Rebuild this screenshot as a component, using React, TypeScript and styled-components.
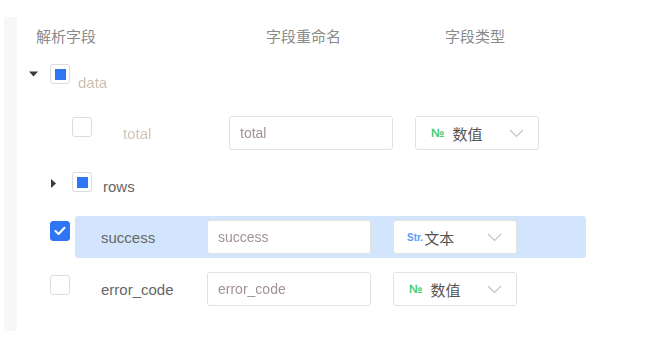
import styled, { createGlobalStyle } from 'styled-components';

const GlobalStyle = createGlobalStyle`
  body {
    margin: 0;
    background: #fff;
    font-family: "Liberation Sans", "Noto Sans CJK SC", sans-serif;
  }
`

type FieldType = 'num' | 'str';

type Field = {
  name: string;
  rename?: string;
  type?: FieldType;
  origin: number;
  checkTop: number;
  state: 'none' | 'partial' | 'checked';
  caret?: 'down' | 'right';
  parent?: boolean;
  faded?: boolean;
  active?: boolean;
}

const fields: Field[] = [
  { name: 'data', origin: 50, checkTop: 4, state: 'partial', caret: 'down', parent: true, faded: true },
  { name: 'total', rename: 'total', type: 'num', origin: 72, checkTop: 5, state: 'none', faded: true },
  { name: 'rows', origin: 72, checkTop: 8, state: 'partial', caret: 'right', parent: true },
  { name: 'success', rename: 'success', type: 'str', origin: 50, checkTop: 5, state: 'checked', active: true },
  { name: 'error_code', rename: 'error_code', type: 'num', origin: 50, checkTop: 7, state: 'none' },
];

const Page = styled.div`
  display: flex;
  padding: 17px 0 0 4px;
`

const Strip = styled.div`
  width: 13px;
  height: 314px;
  flex-shrink: 0;
  background: #f7f7f7;
`

const Content = styled.div`
  flex: 1;
  padding-top: 9px;
`

const HeaderRow = styled.div`
  display: flex;
  height: 22px;
  line-height: 22px;
  font-size: 15px;
  color: #8a8a8a;
`

const HeadCell = styled.div<{ $left: number; $width: number }>`
  margin-left: ${p => p.$left}px;
  width: ${p => p.$width}px;
`

const Tree = styled.div`
  display: flex;
  flex-direction: column;
  gap: 10px;
  margin-top: 12px;
`

const Row = styled.div<{ $indent: number }>`
  display: flex;
  align-items: center;
  height: 42px;
  padding-left: ${p => p.$indent}px;
`

const Toggle = styled.div<{ $top: number }>`
  display: flex;
  align-items: center;
  align-self: flex-start;
  margin-top: ${p => p.$top}px;
  height: 20px;
`

const CaretSlot = styled.div`
  width: 21px;
  display: flex;
  align-items: center;
`

const Box = styled.div<{ $checked: boolean }>`
  box-sizing: border-box;
  width: 20px;
  height: 20px;
  border-radius: 3px;
  border: 1px solid ${p => (p.$checked ? '#2f76f5' : '#dcdcdc')};
  background: ${p => (p.$checked ? '#2f76f5' : '#fff')};
  display: flex;
  align-items: center;
  justify-content: center;
`

const Partial = styled.div`
  width: 11px;
  height: 11px;
  background: #2f76f5;
`

const ParentLabel = styled.span<{ $faded: boolean }>`
  margin-left: ${p => (p.$faded ? 8 : 11)}px;
  margin-top: 2px;
  font-size: 15px;
  color: ${p => (p.$faded ? '#cbbfae' : '#666')};
  ${p => p.$faded && 'filter: blur(0.6px);'}
`

const Cells = styled.div<{ $active: boolean }>`
  display: flex;
  align-items: center;
  height: 42px;
  margin-left: 5px;
  padding: 0 69px 0 26px;
  border-radius: 3px;
  background: ${p => (p.$active ? '#d2e5fc' : 'transparent')};
`

const Label = styled.span<{ $faded: boolean }>`
  width: 106px;
  font-size: 15px;
  color: ${p => (p.$faded ? '#d2c6b6' : '#666')};
  ${p => p.$faded && 'filter: blur(0.6px);'}
`

const Input = styled.div`
  box-sizing: border-box;
  width: 164px;
  height: 34px;
  border: 1px solid #e2e2e2;
  border-radius: 3px;
  background: #fff;
  padding-left: 10px;
  display: flex;
  align-items: center;
`

const InputValue = styled.span`
  font-size: 14px;
  color: #a2909c;
  filter: blur(0.6px);
`

const Select = styled.div`
  box-sizing: border-box;
  width: 124px;
  height: 34px;
  margin-left: 22px;
  border: 1px solid #e2e2e2;
  border-radius: 3px;
  background: #fff;
  display: flex;
  align-items: center;
  padding: 0 14px 0 13px;
`

const Tag = styled.span<{ $kind: FieldType }>`
  font-size: ${p => (p.$kind === 'str' ? 10 : 12)}px;
  font-weight: bold;
  color: ${p => (p.$kind === 'str' ? '#5b9cf6' : '#45cc72')};
  margin-left: ${p => (p.$kind === 'str' ? 0 : 2)}px;
  margin-right: ${p => (p.$kind === 'str' ? 1 : 8)}px;
`

const TypeName = styled.span`
  font-size: 15px;
  color: #555;
`

const Chevron = styled.svg`
  margin-left: auto;
`

const CaretDown = () => (
  <svg width="9" height="6" viewBox="0 0 9 6">
    <path d="M0 0.5 L9 0.5 L4.5 5.5 Z" fill="#3a3a3a" />
  </svg>
)

const CaretRight = () => (
  <svg width="5" height="9" viewBox="0 0 5 9" style={{ marginTop: 2 }}>
    <path d="M0 0 L5 4.5 L0 9 Z" fill="#3a3a3a" />
  </svg>
)

const Check = () => (
  <svg width="12" height="10" viewBox="0 0 12 10">
    <path d="M1.5 5 L4.6 8 L10.5 1.8" fill="none" stroke="#fff" strokeWidth="2" strokeLinecap="round" strokeLinejoin="round" />
  </svg>
)

const TypeSelect = ({ type }: { type: FieldType }) => (
  <Select>
    <Tag $kind={type}>{type === 'str' ? 'Str.' : '№'}</Tag>
    <TypeName>{type === 'str' ? '文本' : '数值'}</TypeName>
    <Chevron width="15" height="9" viewBox="0 0 15 9">
      <path d="M1 1 L7.5 7.5 L14 1" fill="none" stroke="#c4c4c4" strokeWidth="1.2" />
    </Chevron>
  </Select>
)

const FieldRow = ({ field }: { field: Field }) => (
  <Row $indent={field.origin - 21 - 17}>
    <Toggle $top={field.checkTop}>
      <CaretSlot>
        {field.caret === 'down' && <CaretDown />}
        {field.caret === 'right' && <CaretRight />}
      </CaretSlot>
      <Box $checked={field.state === 'checked'}>
        {field.state === 'partial' && <Partial />}
        {field.state === 'checked' && <Check />}
      </Box>
    </Toggle>
    {field.parent ? (
      <ParentLabel $faded={!!field.faded}>{field.name}</ParentLabel>
    ) : (
      <Cells $active={!!field.active}>
        <Label $faded={!!field.faded}>{field.name}</Label>
        <Input>
          <InputValue>{field.rename}</InputValue>
        </Input>
        {field.type && <TypeSelect type={field.type} />}
      </Cells>
    )}
  </Row>
)

const App = () => {
  return (
    <>
      <GlobalStyle />
      <Page>
        <Strip />
        <Content>
          <HeaderRow>
            <HeadCell $left={19} $width={230}>解析字段</HeadCell>
            <HeadCell $left={0} $width={179}>字段重命名</HeadCell>
            <HeadCell $left={0} $width={100}>字段类型</HeadCell>
          </HeaderRow>
          <Tree>
            {fields.map(f => (
              <FieldRow key={f.name} field={f} />
            ))}
          </Tree>
        </Content>
      </Page>
    </>
  )
}

export default App;
